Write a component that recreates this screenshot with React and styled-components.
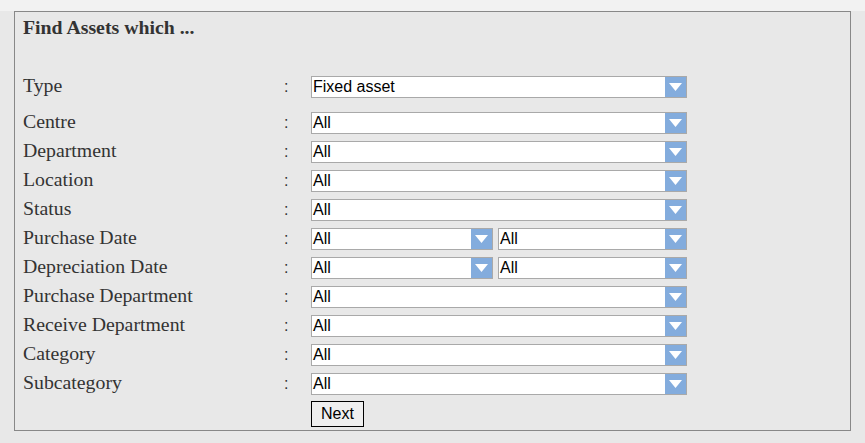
import React from 'react'
import styled, { createGlobalStyle } from 'styled-components'

const GlobalStyle = createGlobalStyle`
  html, body {
    margin: 0;
    padding: 0;
    background: #e8e8e8;
  }
`

const TopStrip = styled.div`
  height: 11px;
  background: #f2f2f2;
`

const Panel = styled.div`
  box-sizing: border-box;
  margin-left: 14px;
  width: 837px;
  height: 420px;
  border: 1px solid #888;
  background: #e8e8e8;
  padding: 4px 8px 0 8px;
`

const Title = styled.div`
  font-family: "Liberation Serif", "Times New Roman", serif;
  font-weight: bold;
  font-size: 19.8px;
  line-height: 22px;
  color: #333;
  margin-bottom: 38px;
`

const Form = styled.div`
  display: grid;
  grid-template-columns: 261px 27px 376px;
  row-gap: 7px;
  align-items: center;
`

const Label = styled.div`
  font-family: "Liberation Serif", "Times New Roman", serif;
  font-size: 19.8px;
  line-height: 16px;
  color: #333;
  padding-bottom: 4px;
  margin-bottom: ${({ $extra }) => ($extra ? '7px' : '0')};
`

const Colon = styled.div`
  font-family: "Liberation Sans", Arial, sans-serif;
  font-size: 16px;
  line-height: 16px;
  color: #333;
  padding-bottom: 1px;
  margin-bottom: ${({ $extra }) => ($extra ? '7px' : '0')};
`

const Field = styled.div`
  display: flex;
  gap: 5px;
  margin-bottom: ${({ $extra }) => ($extra ? '7px' : '0')};
`

const SelectBox = styled.div`
  box-sizing: border-box;
  display: flex;
  align-items: center;
  width: ${({ $w }) => $w}px;
  height: 22px;
  border: 1px solid #a9a9a9;
  background: #fff;
`

const SelectValue = styled.span`
  flex: 1;
  padding-left: 1px;
  font-family: "Liberation Sans", Arial, sans-serif;
  font-size: 16px;
  line-height: 20px;
  color: #000;
  white-space: nowrap;
  overflow: hidden;
`

const Arrow = styled.span`
  display: flex;
  align-items: center;
  justify-content: center;
  width: 21px;
  height: 20px;
  background: #83acdd;
`

const NextButton = styled.button`
  box-sizing: border-box;
  width: 53px;
  height: 26px;
  padding: 0;
  border: 1px solid #000;
  background: #efefef;
  font-family: "Liberation Sans", Arial, sans-serif;
  font-size: 16px;
  color: #000;
  margin-top: -1px;
`

const Select = ({ value, width }) => (
  <SelectBox $w={width}>
    <SelectValue>{value}</SelectValue>
    <Arrow>
      <svg width="13" height="8" viewBox="0 0 13 8">
        <polygon points="0,0 13,0 6.5,8" fill="#fff" />
      </svg>
    </Arrow>
  </SelectBox>
)

const rows = [
  { label: 'Type', value: 'Fixed asset', extra: true },
  { label: 'Centre', value: 'All' },
  { label: 'Department', value: 'All' },
  { label: 'Location', value: 'All' },
  { label: 'Status', value: 'All' },
  { label: 'Purchase Date', split: true },
  { label: 'Depreciation Date', split: true },
  { label: 'Purchase Department', value: 'All' },
  { label: 'Receive Department', value: 'All' },
  { label: 'Category', value: 'All' },
  { label: 'Subcategory', value: 'All' },
]

export default function App() {
  return (
    <>
      <GlobalStyle />
      <TopStrip />
      <Panel>
        <Title>Find Assets which ...</Title>
        <Form>
          {rows.map((r) => (
            <React.Fragment key={r.label}>
              <Label $extra={r.extra}>{r.label}</Label>
              <Colon $extra={r.extra}>:</Colon>
              <Field $extra={r.extra}>
                {r.split ? (
                  <>
                    <Select value="All" width={182} />
                    <Select value="All" width={189} />
                  </>
                ) : (
                  <Select value={r.value} width={376} />
                )}
              </Field>
            </React.Fragment>
          ))}
          <span />
          <span />
          <div>
            <NextButton>Next</NextButton>
          </div>
        </Form>
      </Panel>
    </>
  )
}
